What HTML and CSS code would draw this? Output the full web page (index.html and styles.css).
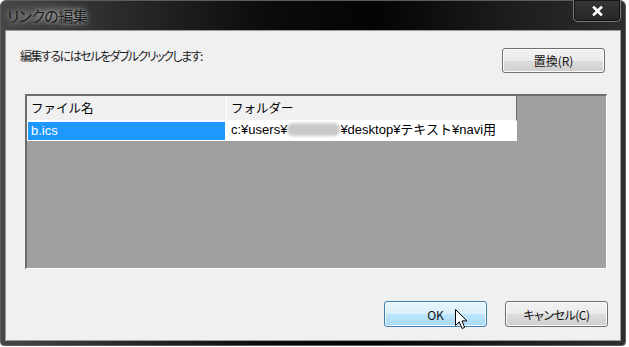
FILE: index.html
```html
<!DOCTYPE html>
<html lang="ja">
<head>
  <meta charset="UTF-8" />
  <title>リンクの編集</title>
  <link rel="stylesheet" href="styles.css">
</head>
<body>
  <div class="window">
    <div class="titlebar">
      <span class="title">リンクの編集</span>
      <button class="close-btn">
        <svg width="11" height="10" viewBox="0 0 11 10"><path d="M2 1.5 L9 8.5 M9 1.5 L2 8.5" stroke="#fff" stroke-width="2.6" stroke-linecap="square"/></svg>
      </button>
    </div>

    <div class="panel">
      <div class="top-row">
        <p class="hint">編集するにはセルをダブルクリックします:</p>
        <button class="btn btn-replace">置換(R)</button>
      </div>

      <div class="list">
        <div class="grid">
          <div class="th">ファイル名</div>
          <div class="th th-last">フォルダー</div>
          <div class="td selected">b.ics</div>
          <div class="td">c:¥users¥<span class="masked"></span>¥desktop¥テキスト¥navi用</div>
        </div>
      </div>

      <div class="bottom-row">
        <button class="btn btn-default">OK</button>
        <button class="btn btn-cancel">キャンセル(C)</button>
      </div>
    </div>

    <svg class="cursor" width="13" height="21" viewBox="0 0 13 21"><path d="M0.5 0.5 L0.5 16.5 L4.3 12.8 L7 19.5 L9.6 18.4 L7 11.9 L12 11.9 Z" fill="#fff" stroke="#000" stroke-width="1" stroke-linejoin="miter"/></svg>
  </div>
</body>
</html>
```

FILE: styles.css
```css
* { box-sizing: border-box; }
body { margin: 0; background: #fff; font-family: "Noto Sans CJK JP", "Noto Sans", sans-serif; }

.window { position: relative; width: 626px; height: 346px; display: flex; flex-direction: column; padding: 0 4px 4px; border: 1px solid #5c5c5c; border-radius: 6px 6px 4px 4px;
  background: linear-gradient(90deg, #474747 0%, #2c2c2c 18%, #0c0c0c 42%, #040404 60%, #1d1d1d 82%, #2e2e2e 100%); }

.titlebar { height: 29px; display: flex; align-items: flex-start; }
.title { padding: 5px 6px 0 2px; font-size: 15px; line-height: 20px; letter-spacing: -0.6px; color: #1a1a1a; font-feature-settings: "palt";
  background: radial-gradient(ellipse at center, rgba(110,110,110,.55) 0%, rgba(110,110,110,0) 70%);
  text-shadow: 0 0 4px rgba(255,255,255,.6), 0 0 9px rgba(255,255,255,.4); }
.close-btn { margin: -1px 0 0 auto; width: 48px; height: 22px; display: flex; align-items: center; justify-content: center; padding: 0; border: 1px solid #7a7a7a; border-top: none; border-radius: 0 0 5px 5px; background: linear-gradient(#363636 0%, #262626 100%); box-shadow: inset 0 0 0 1px rgba(0,0,0,.6); }

.panel { flex: 1; display: flex; flex-direction: column; padding: 17px 15px 0 14px; background: #f0f0f0; border: 1px solid #9a9a9a; }

.top-row { display: flex; justify-content: space-between; align-items: flex-start; height: 25px; }
.hint { margin: 0; padding-top: 1px; font-size: 12px; line-height: 14px; letter-spacing: -1.5px; color: #1e1e1e; font-feature-settings: "palt"; }

.btn { width: 103px; height: 26px; padding: 0; font-family: inherit; font-size: 12px; color: #111; font-feature-settings: "palt"; border: 1px solid #707070; border-radius: 3px;
  background: linear-gradient(#f2f2f2 0%, #ebebeb 50%, #dddddd 51%, #cfcfcf 100%); box-shadow: inset 0 0 0 1px #fcfcfc; }
.btn-replace { height: 25px; }
.btn-cancel { letter-spacing: -0.5px; }
.btn-default { border-color: #3c7fb1; background: linear-gradient(#eaf6fd 0%, #d9f0fc 50%, #bee6fd 51%, #a7d9f5 100%); box-shadow: inset 0 0 0 1px #f6fbfe; }

.list { height: 175px; margin: 21px -2px 0 5px; background: #a0a0a0; border-style: solid; border-width: 2px 1px 1px 2px; border-color: #6e6e6e #fff #fff #6e6e6e; }
.grid { display: grid; grid-template-columns: 200px 290px; }
.th { height: 25px; padding-left: 4px; font-size: 12.5px; line-height: 23px; color: #000; background: #f0f0f0; border-right: 1px solid #fff; border-bottom: 1px solid #fff; }
.th-last { border-right-color: #6e6e6e; }
.td { height: 20px; padding-left: 4px; font-family: "Liberation Sans", "Noto Sans CJK JP", sans-serif; font-size: 13px; line-height: 18px; color: #000; background: #fff; white-space: nowrap; }
.td.selected { padding-left: 3px; color: #fff; background: #1e98ff; border: 1px solid #fff; border-right-width: 2px; }
.masked { display: inline-block; width: 53px; height: 13px; vertical-align: -2px; background: #c9c9c9; border-radius: 6px; filter: blur(1.5px); }

.bottom-row { display: flex; justify-content: flex-end; gap: 18px; margin: 32px -3px 0 0; }

.cursor { position: absolute; left: 454px; top: 308px; }
```
